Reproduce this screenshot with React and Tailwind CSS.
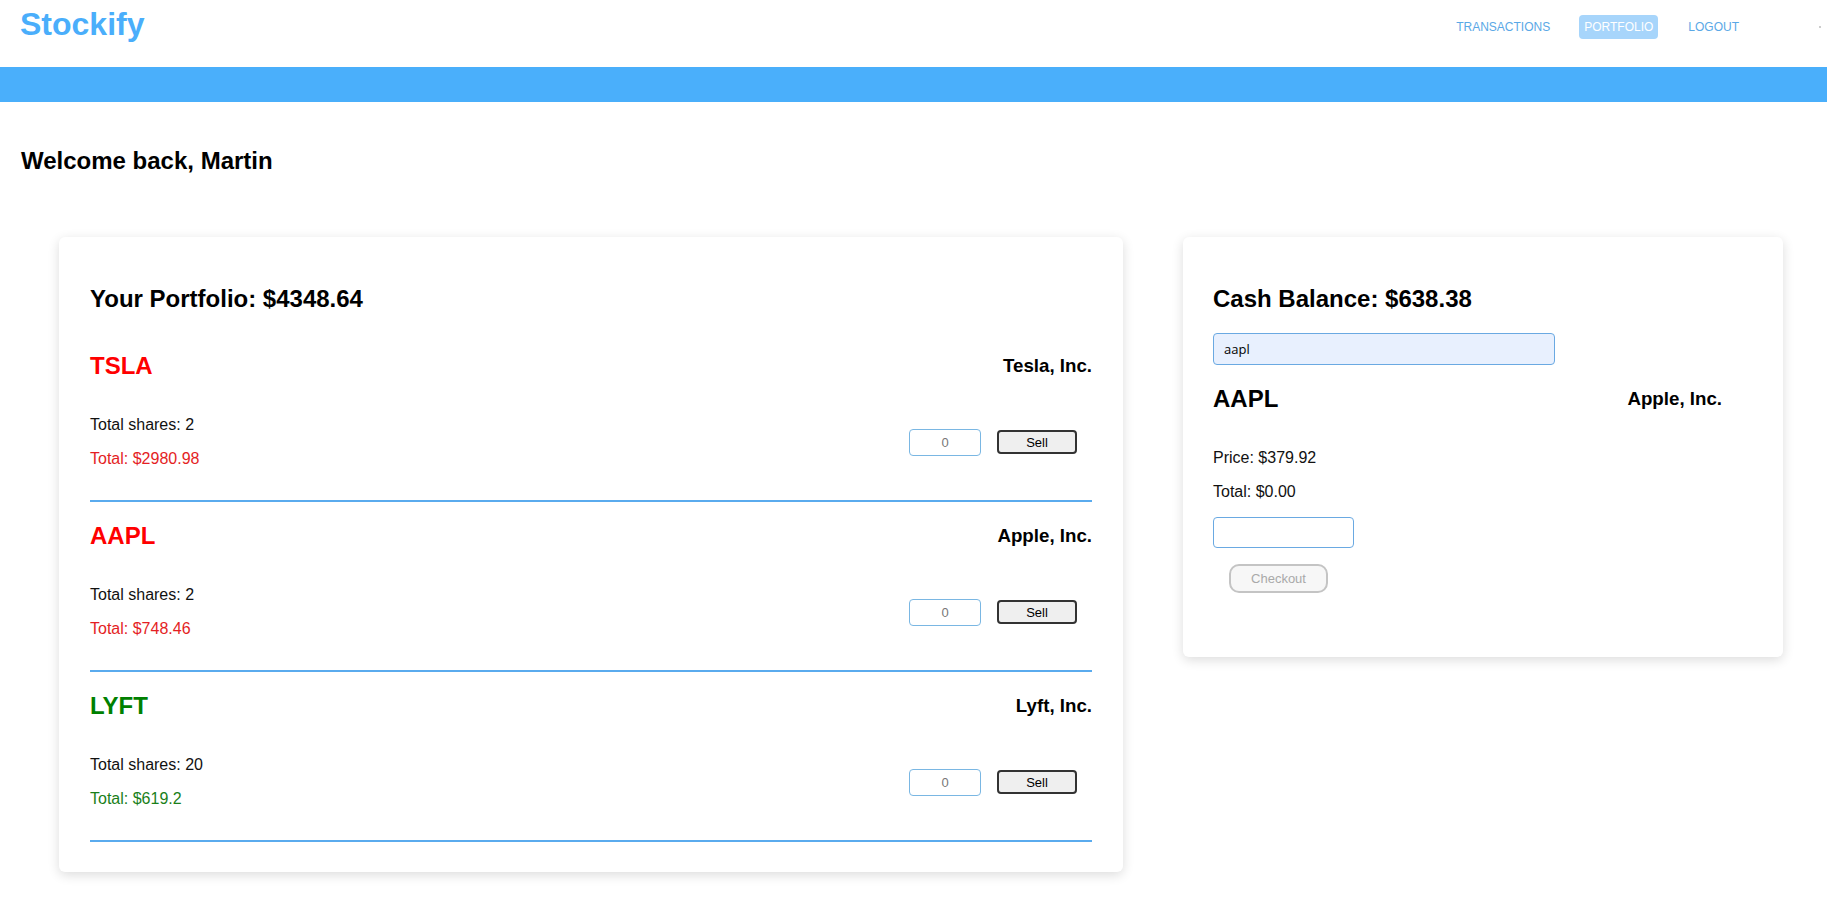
import React from "react";

const holdings = [
  { ticker: "TSLA", name: "Tesla, Inc.", shares: 2, total: "$2980.98", up: false },
  { ticker: "AAPL", name: "Apple, Inc.", shares: 2, total: "$748.46", up: false },
  { ticker: "LYFT", name: "Lyft, Inc.", shares: 20, total: "$619.2", up: true },
];

function HoldingRow({ h }) {
  return (
    <div>
      <div className="flex items-center justify-between">
        <h2
          className={
            "my-[20px] text-[24px] leading-[28px] font-bold " +
            (h.up ? "text-[#008000]" : "text-[#ff0000]")
          }
        >
          {h.ticker}
        </h2>
        <h3 className="my-[18.72px] text-[18.72px] leading-[21.5px] font-bold text-black">{h.name}</h3>
      </div>
      <div className="flex items-center justify-between">
        <div className="py-[16px]">
          <p className="text-[16px] leading-[18px] text-[#111]">Total shares: {h.shares}</p>
          <p
            className={
              "mt-[16px] text-[16px] leading-[18px] " + (h.up ? "text-[#1a7f1a]" : "text-[#e41e24]")
            }
          >
            Total: {h.total}
          </p>
        </div>
        <div className="flex items-center gap-[16px] pr-[15px]">
          <input
            readOnly
            placeholder="0"
            className="w-[72px] h-[27px] rounded-[4px] border border-[#7ab7e3] bg-white text-center text-[13px] text-[#555] placeholder:text-[#777] outline-none"
          />
          <button className="w-[80px] h-[24px] rounded-[4px] border-2 border-[#333333] bg-[#efefef] text-[13px] leading-none text-black">
            Sell
          </button>
        </div>
      </div>
      <div className="h-[16px]" />
      <div className="h-[2px] bg-[#5aabee]" />
    </div>
  );
}

export default function App() {
  return (
    <div className="min-h-[916px] bg-white font-['Liberation_Sans',Arial,sans-serif] text-black">
      <header className="h-[67px] flex items-start justify-between bg-white">
        <div className="pl-[20px] pt-[6px] text-[32px] leading-[37px] font-bold text-[#4aaefb]">Stockify</div>
        <nav className="flex items-start pt-[15px] pr-[6px]">
          <a className="h-[24px] px-[5px] flex items-center text-[12px] text-[#5aa8e6]">TRANSACTIONS</a>
          <a className="ml-[24px] h-[24px] px-[5px] flex items-center rounded-[4px] bg-[#a7d5fb] text-[12px] text-white">
            PORTFOLIO
          </a>
          <a className="ml-[25px] h-[24px] px-[5px] flex items-center text-[12px] text-[#5aa8e6]">LOGOUT</a>
          <span className="ml-[75px] mt-[11px] w-[2px] h-[2px] rounded-full bg-[#bbbbbb]" />
        </nav>
      </header>
      <div className="h-[35px] bg-[#4aaffb]" />

      <h2 className="mt-[45px] pl-[21px] text-[24px] leading-[28px] font-bold text-black">Welcome back, Martin</h2>

      <main className="flex items-start gap-[60px] pl-[59px] pt-[62px] pb-[40px]">
        <section className="w-[1064px] px-[31px] pt-[28px] pb-[30px] rounded-[6px] bg-white shadow-[0_3px_12px_rgba(0,0,0,0.14)]">
          <h2 className="mt-[20px] mb-[19px] text-[24px] leading-[28px] font-bold">Your Portfolio: $4348.64</h2>
          {holdings.map((h) => (
            <HoldingRow key={h.ticker} h={h} />
          ))}
        </section>

        <section className="w-[600px] px-[30px] pt-[28px] pb-[64px] rounded-[6px] bg-white shadow-[0_3px_12px_rgba(0,0,0,0.14)]">
          <h2 className="my-[20px] text-[24px] leading-[28px] font-bold">Cash Balance: $638.38</h2>
          <input
            readOnly
            value="aapl"
            className="block w-[342px] h-[32px] px-[10px] rounded-[4px] border border-[#6aa9e2] bg-[#e8f0fe] text-[13px] text-black outline-none font-['Open_Sans',Arial,sans-serif]"
          />
          <div className="flex items-center justify-between pr-[31px]">
            <h2 className="my-[20px] text-[24px] leading-[28px] font-bold">AAPL</h2>
            <h3 className="my-[18.72px] text-[18.72px] leading-[21.5px] font-bold">Apple, Inc.</h3>
          </div>
          <p className="mt-[16px] text-[16px] leading-[18px] text-[#111]">Price: $379.92</p>
          <p className="mt-[16px] mb-[16px] text-[16px] leading-[18px] text-[#111]">Total: $0.00</p>
          <input
            readOnly
            className="block w-[141px] h-[31px] rounded-[4px] border border-[#6aa9e2] bg-white outline-none"
          />
          <button
            disabled
            className="block mt-[16px] ml-[16px] w-[99px] h-[29px] rounded-[10px] border-2 border-[#c4c4c4] bg-[#f7f7f7] text-[13px] leading-none text-[#a9a9a9]"
          >
            Checkout
          </button>
        </section>
      </main>
    </div>
  );
}
